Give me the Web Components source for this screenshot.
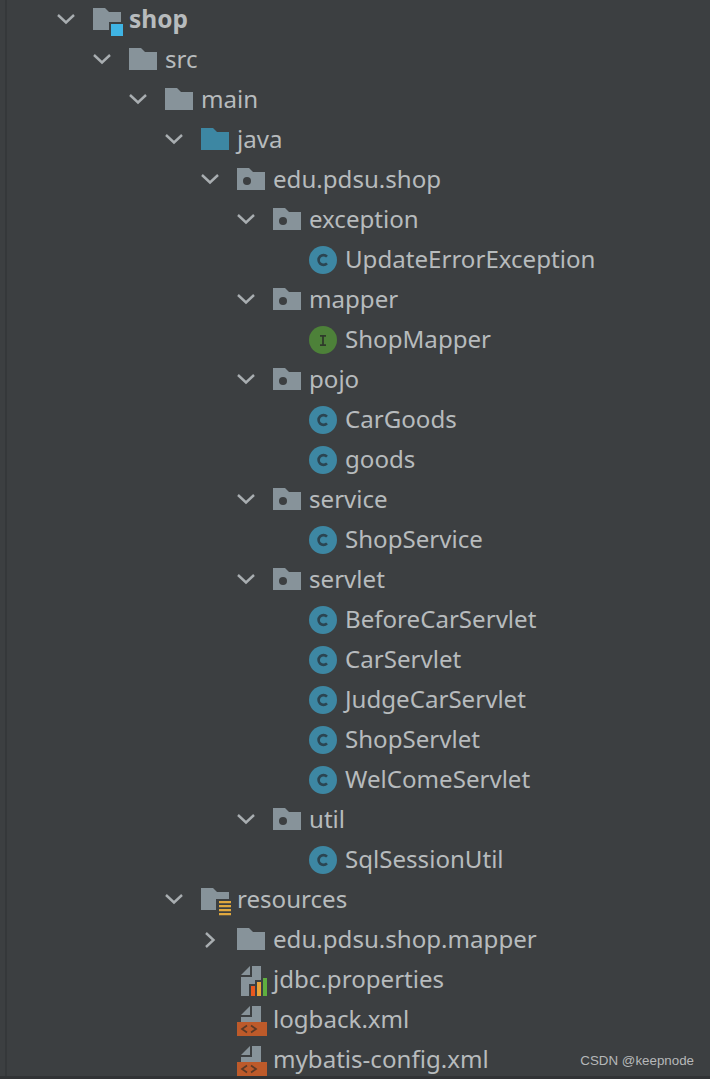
<!DOCTYPE html>
<html>
<head>
<meta charset="utf-8">
<title>shop</title>
<style>
  html, body { margin: 0; padding: 0; background: #3c3f41; }
</style>
</head>
<body>
<project-tree>
  <tree-row level="0" icon="module" arrow="open" bold>shop</tree-row>
  <tree-row level="1" icon="folder" arrow="open">src</tree-row>
  <tree-row level="2" icon="folder" arrow="open">main</tree-row>
  <tree-row level="3" icon="source" arrow="open">java</tree-row>
  <tree-row level="4" icon="package" arrow="open">edu.pdsu.shop</tree-row>
  <tree-row level="5" icon="package" arrow="open">exception</tree-row>
  <tree-row level="6" icon="class">UpdateErrorException</tree-row>
  <tree-row level="5" icon="package" arrow="open">mapper</tree-row>
  <tree-row level="6" icon="interface">ShopMapper</tree-row>
  <tree-row level="5" icon="package" arrow="open">pojo</tree-row>
  <tree-row level="6" icon="class">CarGoods</tree-row>
  <tree-row level="6" icon="class">goods</tree-row>
  <tree-row level="5" icon="package" arrow="open">service</tree-row>
  <tree-row level="6" icon="class">ShopService</tree-row>
  <tree-row level="5" icon="package" arrow="open">servlet</tree-row>
  <tree-row level="6" icon="class">BeforeCarServlet</tree-row>
  <tree-row level="6" icon="class">CarServlet</tree-row>
  <tree-row level="6" icon="class">JudgeCarServlet</tree-row>
  <tree-row level="6" icon="class">ShopServlet</tree-row>
  <tree-row level="6" icon="class">WelComeServlet</tree-row>
  <tree-row level="5" icon="package" arrow="open">util</tree-row>
  <tree-row level="6" icon="class">SqlSessionUtil</tree-row>
  <tree-row level="3" icon="resources" arrow="open">resources</tree-row>
  <tree-row level="4" icon="folder" arrow="closed">edu.pdsu.shop.mapper</tree-row>
  <tree-row level="4" icon="properties">jdbc.properties</tree-row>
  <tree-row level="4" icon="xml">logback.xml</tree-row>
  <tree-row level="4" icon="xml">mybatis-config.xml</tree-row>
</project-tree>
<water-mark>CSDN @keepnode</water-mark>

<script>
const FOLDER = "M0 0H12L16 4H28V22H0Z";

const ICONS = {
  folder: `<path fill="#87939a" d="${FOLDER}"/>`,
  source: `<path fill="#3d87a3" d="${FOLDER}"/>`,
  package: `<path fill="#87939a" d="${FOLDER}"/><circle cx="10" cy="13" r="4" fill="#3c3f41"/>`,
  module: `<path fill="#87939a" d="${FOLDER}"/><rect x="16" y="14" width="16" height="16" fill="#3c3f41"/><rect x="18" y="16" width="12" height="12" fill="#3fb4e4"/>`,
  resources: `<path fill="#87939a" d="${FOLDER}"/><rect x="15" y="11" width="17" height="18" fill="#3c3f41"/>
    <path fill="#e0a83f" d="M18 13h12v2.3H18zM18 17h12v2.3H18zM18 21h12v2.3H18zM18 25h12v2.3H18z"/>`,
  class: `<circle cx="14" cy="12" r="14" fill="#3d87a3"/>
    <path fill="none" stroke="#2b4552" stroke-width="2.6" d="M18 8.6A4.9 4.9 0 1 0 18 15.4"/>`,
  interface: `<circle cx="14" cy="12" r="14" fill="#4d8139"/>
    <path fill="none" stroke="#2f3a2b" stroke-width="1.8" d="M11 7.8H17M11 17.2H17M14 7.8V17.2"/>`,
  properties: `<g transform="translate(4,-2)">
    <path fill="#87939a" d="M0 9L9 0V9Z"/>
    <path fill="#87939a" d="M0 11H11V0H20V14H14V18H8V30H0Z"/>
    <rect x="10" y="20" width="4" height="10" fill="#e8581f"/>
    <rect x="16" y="16" width="4" height="14" fill="#e8a33a"/>
    <rect x="22" y="12" width="4" height="18" fill="#5fae3f"/></g>`,
  xml: `<path fill="#87939a" d="M4 7L13 -2V7Z"/>
    <path fill="#87939a" d="M15 -2H24V14H4V9H15Z"/>
    <rect x="0" y="14" width="30" height="14" fill="#bd5a2a"/>
    <path fill="none" stroke="#5a3a28" stroke-width="1.7" d="M10 17.5L5 21L10 24.5M14 17.5L19 21L14 24.5"/>`,
};

const rowTemplate = document.createElement("template");
rowTemplate.innerHTML = `
  <style>
    :host {
      display: block;
      height: 40px;
    }
    .row {
      display: flex;
      align-items: center;
      height: 100%;
    }
    .arrow {
      flex: none;
      width: 36px;
      height: 38px;
      margin-bottom: 2px;
      display: flex;
      align-items: center;
      color: #a9aeb1;
    }
    svg { display: block; overflow: visible; }
    .icon { flex: none; align-self: flex-start; margin-top: 8px; }
    .label {
      font: 24.1px/38px "Noto Sans", "Open Sans", sans-serif;
      color: #b7bbbd;
      white-space: nowrap;
      margin-bottom: 2px;
    }
    :host([bold]) .label { font-weight: 700; font-size: 24.5px; }
  </style>
  <div class="row">
    <span class="arrow"></span>
    <svg class="icon" width="36" height="30" viewBox="0 0 36 30"></svg>
    <span class="label"><slot></slot></span>
  </div>
`;

class TreeRow extends HTMLElement {
  constructor() {
    super();
    this._shadowRoot = this.attachShadow({ mode: "open" });
    this._shadowRoot.appendChild(rowTemplate.content.cloneNode(true));
    this.$row = this._shadowRoot.querySelector(".row");
    this.$arrow = this._shadowRoot.querySelector(".arrow");
    this.$icon = this._shadowRoot.querySelector(".icon");
  }

  connectedCallback() {
    const level = Number(this.getAttribute("level") || 0);
    this.$row.style.paddingLeft = `${57 + 36 * level}px`;
    this.$icon.innerHTML = ICONS[this.getAttribute("icon")] || "";
    const arrow = this.getAttribute("arrow");
    if (arrow === "open") {
      this.$arrow.innerHTML = `<svg width="18" height="10" viewBox="0 0 18 10"><path fill="none" stroke="currentColor" stroke-width="2.4" d="M1 1L9 8.5L17 1"/></svg>`;
    } else if (arrow === "closed") {
      this.$arrow.innerHTML = `<svg width="10" height="16" viewBox="0 0 10 16" style="margin-left:4px;margin-top:2px"><path fill="none" stroke="currentColor" stroke-width="2.4" d="M1 1L8.5 8L1 15"/></svg>`;
    }
  }
}

const treeTemplate = document.createElement("template");
treeTemplate.innerHTML = `
  <style>
    :host {
      display: block;
      height: 1079px;
      overflow: hidden;
      background:
        linear-gradient(#313335, #313335) 0 100% / 100% 3px no-repeat,
        linear-gradient(#35383a, #35383a) 5px 0 / 2px 100% no-repeat,
        #3c3f41;
    }
  </style>
  <slot></slot>
`;

class ProjectTree extends HTMLElement {
  constructor() {
    super();
    this.attachShadow({ mode: "open" }).appendChild(treeTemplate.content.cloneNode(true));
  }
}

const markTemplate = document.createElement("template");
markTemplate.innerHTML = `
  <style>
    :host {
      position: absolute;
      right: 16px;
      bottom: 9px;
      font: 13.35px/18px "Liberation Sans", Arial, sans-serif;
      color: #b6b8b9;
      white-space: nowrap;
    }
  </style>
  <slot></slot>
`;

class WaterMark extends HTMLElement {
  constructor() {
    super();
    this.attachShadow({ mode: "open" }).appendChild(markTemplate.content.cloneNode(true));
  }
}

customElements.define("tree-row", TreeRow);
customElements.define("project-tree", ProjectTree);
customElements.define("water-mark", WaterMark);
</script>
</body>
</html>
